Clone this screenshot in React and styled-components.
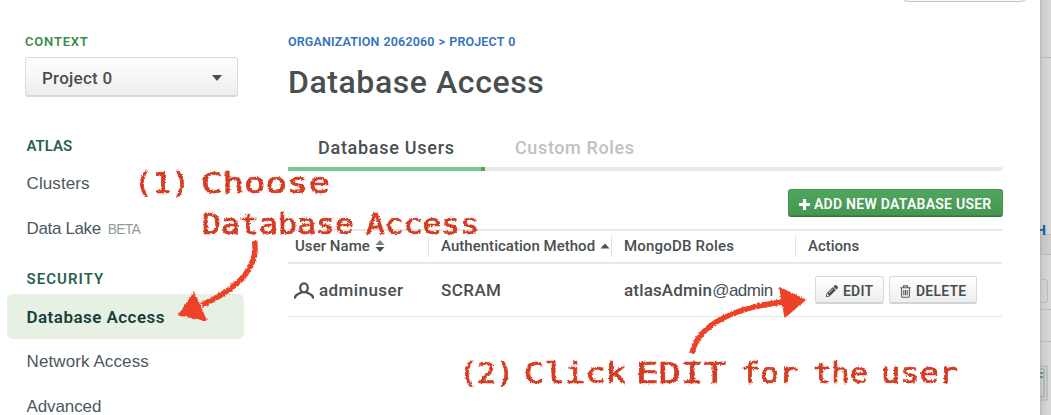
import React from 'react';
import styled, { createGlobalStyle, css } from 'styled-components';
import { FaPencilAlt } from 'react-icons/fa';

const GlobalStyle = createGlobalStyle`
  * { box-sizing: border-box; }
  body {
    margin: 0;
    background: #fff;
    color: #494f50;
    font-family: Roboto, "Liberation Sans", sans-serif;
    overflow: hidden;
  }
`;

const Page = styled.div`
  position: relative;
  display: flex;
  width: 1051px;
  height: 415px;
  overflow: hidden;
`;

const Sidebar = styled.aside`
  width: 250px;
  flex: none;
  padding: 33px 6px 0 7px;
`;

const Context = styled.div`
  padding: 0 0 38px 18px;
`;

const ContextLabel = styled.div`
  height: 24px;
  line-height: 17px;
  font-size: 13px;
  font-weight: 600;
  letter-spacing: 0.8px;
  color: #3d8b4b;
`;

const ProjectSelect = styled.button`
  display: flex;
  align-items: center;
  justify-content: space-between;
  width: 213px;
  height: 40px;
  padding: 3px 15px 0 16px;
  border: 1px solid #d9dddd;
  border-bottom: 2px solid #d3d9d8;
  border-radius: 3px;
  background: linear-gradient(#fff, #ededed);
  color: #494f50;
  font: 500 17px Roboto, sans-serif;
  letter-spacing: 0.25px;
`;

const NavSection = styled.nav`
  padding-bottom: 17px;
`;

const NavTitle = styled.div`
  height: 26px;
  padding-left: 19.5px;
  line-height: 22px;
  font-size: 15px;
  font-weight: 600;
  letter-spacing: ${(p) => p.$spacing || '0'};
  color: #26634d;
`;

const NavItem = styled.a`
  display: flex;
  align-items: baseline;
  height: 45px;
  width: 237px;
  padding-left: 19.5px;
  border-radius: 6px;
  font: 400 17px/46px "Liberation Sans", sans-serif;
  letter-spacing: ${(p) => p.$spacing || '0.1px'};
  color: #4a5961;
  ${(p) => p.$active && css`
    background: #e6f1e4;
    color: #173f39;
    font: 600 17px/46px Roboto, sans-serif;
  `}
`;

const Beta = styled.span`
  margin-left: 7px;
  font-size: 14px;
  letter-spacing: -0.84px;
  color: #929ba0;
`;

const Main = styled.main`
  width: 714px;
  flex: none;
  margin-left: 38px;
`;

const TopBar = styled.div`
  position: absolute;
  top: 0;
  left: 899px;
  width: 131px;
  height: 3px;
  overflow: hidden;
  display: flex;
  align-items: flex-end;
`;

const TopButton = styled.div`
  flex: none;
  width: 131px;
  height: 28px;
  margin-bottom: 1px;
  border: 1px solid #b9c6c2;
  border-radius: 10px;
  background: #f7faf9;
`;

const Breadcrumb = styled.div`
  padding-top: 33px;
  line-height: 17px;
  font-size: 12.5px;
  font-weight: 600;
  letter-spacing: 0.14px;
  word-spacing: 0.8px;
  white-space: nowrap;
  color: #3472bd;
`;

const Title = styled.h1`
  margin: 12px 0 26px;
  line-height: 40px;
  font-size: 32px;
  font-weight: 500;
  letter-spacing: 0.58px;
`;

const Tabs = styled.div`
  display: flex;
  height: 43px;
  background: linear-gradient(#e7e8e8, #e7e8e8) bottom / 100% 4px no-repeat;
`;

const Tab = styled.div`
  width: 197px;
  padding-left: 30px;
  font-size: 18px;
  font-weight: 500;
  line-height: 40px;
  white-space: nowrap;
  letter-spacing: ${(p) => (p.$active ? '0.72px' : '0.62px')};
  color: ${(p) => (p.$active ? '#494f50' : '#bfc1c1')};
  ${(p) => p.$active && css`
    background: linear-gradient(90deg, #7dc68f 193px, #4fa55c 193px) bottom / 100% 4px no-repeat;
  `}
`;

const Toolbar = styled.div`
  display: flex;
  justify-content: flex-end;
  margin-right: -1px;
  padding: 18px 0 12px;
`;

const AddButton = styled.button`
  display: flex;
  align-items: center;
  gap: 4px;
  width: 215px;
  height: 28px;
  padding: 2px 0 0 10px;
  border: 1px solid #43934f;
  border-bottom-color: #35783f;
  border-radius: 3px;
  background: linear-gradient(#50a65c, #469552);
  box-shadow: inset 0 -1px #3c8547;
  color: #fff;
  white-space: nowrap;
  font: 600 14px Roboto, sans-serif;
  letter-spacing: 0.26px;
`;

const Row = styled.div`
  display: grid;
  grid-template-columns: 141px 183px 184px 206px;
  align-items: center;
  height: 53px;
  border-bottom: 1px solid #e4e6e6;
  font-size: 17px;
  font-weight: 500;
`;

const HeaderRow = styled(Row)`
  height: 35px;
  border-top: 2px solid #e7e9e9;
  border-bottom: 2px solid #e7e9e9;
  font-size: 15px;
`;

const HeaderCell = styled.div`
  display: flex;
  align-items: center;
  gap: 5px;
  height: 21px;
  padding: 0 0 2px ${(p) => (p.$first ? '7px' : '12px')};
  border-right: ${(p) => (p.$last ? '0' : '1px solid #e2e4e4')};
  white-space: nowrap;
  letter-spacing: ${(p) => p.$spacing || '0'};
`;

const Cell = styled.div`
  display: flex;
  align-items: center;
  padding-left: ${(p) => p.$pad || '12px'};
  white-space: nowrap;
  letter-spacing: ${(p) => p.$spacing || '0'};
  gap: ${(p) => p.$gap || '0'};
`;

const Role = styled.span`
  white-space: nowrap;
`;

const Source = styled.span`
  font: 400 17px "Liberation Sans", sans-serif;
  letter-spacing: -0.5px;
`;

const ActionButton = styled.button`
  display: flex;
  align-items: center;
  gap: 5px;
  width: ${(p) => p.$width};
  height: 28px;
  padding: 3px 0 0 10px;
  border: 1px solid #d7dadb;
  border-bottom: 2px solid #d0d5d5;
  border-radius: 3px;
  background: linear-gradient(#fff, #eee);
  color: #494f50;
  font: 600 14px Roboto, sans-serif;
  letter-spacing: 0.2px;
`;

const Backdrop = styled.div`
  position: relative;
  width: 11px;
  height: 415px;
  margin-left: auto;
  overflow: hidden;
  background: linear-gradient(90deg, #b5b5b5, #cbcbcb 2px, #d9d9d9);
  flex: none;
`;

const Band = styled.div`
  height: ${(p) => p.$height};
  border-bottom: 1px solid #bababa;
  padding-top: ${(p) => p.$top || '0'};
  background: ${(p) => p.$tint || 'transparent'};
`;

const ClippedLink = styled.div`
  width: 6px;
  height: 16px;
  display: flex;
  justify-content: flex-end;
  overflow: hidden;
  font: 700 15px/16px "Liberation Sans", sans-serif;
  color: #225b9b;
`;

const ClippedField = styled.div`
  width: 8px;
  height: 24px;
  border: 1px solid #b9b9b9;
  border-left: 0;
  border-radius: 0 4px 4px 0;
`;

const Overlay = styled.svg`
  position: absolute;
  inset: 0;
`;

const UserIcon = () => (
  <svg width="20" height="17" viewBox="0 0 20 17" fill="none" stroke="#494f50" strokeWidth="2.2">
    <ellipse cx="10" cy="5.8" rx="3.8" ry="4.5" />
    <path d="M1.100 16.500v-1.400c.2-2.500 3.400-3 6.800-4.800M18.900 16.500v-1.400c-.2-2.500-3.400-3-6.800-4.800" />
  </svg>
);

const PlusIcon = () => (
  <svg width="11" height="11" viewBox="0 0 11 11">
    <path d="M5.500 0v11M0 5.500h11" stroke="#fff" strokeWidth="3.200" />
  </svg>
);

const SortIcon = () => (
  <svg width="10" height="12" viewBox="0 0 10 12">
    <path d="M5 0l4.500 5h-9z" fill="#7d8283" />
    <path d="M5 12L.5 7h9z" fill="#494f50" />
  </svg>
);

const Triangle = ({ down }) => (
  <svg width="10" height="6" viewBox="0 0 10 6">
    <path d={down ? 'M0 0h10L5 6z' : 'M5 .5l4.500 5h-9z'} fill="#494f50" />
  </svg>
);

const TrashIcon = () => (
  <svg width="11" height="13" viewBox="0 0 11 13" fill="none" stroke="#5b6061" strokeWidth="1.100">
    <path d="M.3 2.800h10.400M3.500 2.600V.9h4v1.700M1.600 3v8.400q0 .9.9.9h6q.9 0 .9-.9V3M3.800 5v5.300M5.500 5v5.300M7.200 5v5.300" />
  </svg>
);

/* word, left edge, baseline, drawn width */
const notes = [
  ['(1)', 134, 193, 56],
  ['Choose', 201, 193, 129],
  ['Database', 202, 234, 152],
  ['Access', 366, 234, 113],
  ['(2)', 459, 383, 55],
  ['Click', 524, 383, 102],
  ['EDIT', 636, 383, 90],
  ['for', 741, 383, 57],
  ['the', 813, 383, 55],
  ['user', 881, 383, 77],
];

export default function App() {
  return (
    <Page>
      <GlobalStyle />
      <Sidebar>
        <Context>
          <ContextLabel>CONTEXT</ContextLabel>
          <ProjectSelect>Project 0 <Triangle down /></ProjectSelect>
        </Context>
        <NavSection>
          <NavTitle>ATLAS</NavTitle>
          <NavItem>Clusters</NavItem>
          <NavItem $spacing="-0.35px">Data Lake<Beta>BETA</Beta></NavItem>
        </NavSection>
        <NavSection>
          <NavTitle $spacing="1.05px">SECURITY</NavTitle>
          <NavItem $active $spacing="0.46px">Database Access</NavItem>
          <NavItem>Network Access</NavItem>
          <NavItem $spacing="-0.1px">Advanced</NavItem>
        </NavSection>
      </Sidebar>

      <Main>
        <TopBar><TopButton /></TopBar>
        <Breadcrumb>ORGANIZATION 2062060 &gt; PROJECT 0</Breadcrumb>
        <Title>Database Access</Title>
        <Tabs>
          <Tab $active>Database Users</Tab>
          <Tab>Custom Roles</Tab>
        </Tabs>
        <Toolbar>
          <AddButton><PlusIcon />ADD NEW DATABASE USER</AddButton>
        </Toolbar>
        <HeaderRow>
          <HeaderCell $first $spacing="0.05px">User Name <SortIcon /></HeaderCell>
          <HeaderCell $spacing="0.03px">Authentication Method <Triangle /></HeaderCell>
          <HeaderCell $spacing="0.2px">MongoDB Roles</HeaderCell>
          <HeaderCell $last>Actions</HeaderCell>
        </HeaderRow>
        <Row>
          <Cell $pad="6px" $gap="5px" $spacing="0.42px"><UserIcon />adminuser</Cell>
          <Cell $spacing="0.44px">SCRAM</Cell>
          <Cell $spacing="0.16px"><Role>atlasAdmin<Source>@admin</Source></Role></Cell>
          <Cell $pad="19px" $gap="5px">
            <ActionButton $width="69px"><FaPencilAlt size={12} />EDIT</ActionButton>
            <ActionButton $width="88px"><TrashIcon />DELETE</ActionButton>
          </Cell>
        </Row>
      </Main>

      <Backdrop>
        <Band $height="58px" />
        <Band $height="177px" $top="164px"><ClippedLink>H</ClippedLink></Band>
        <Band $height="20px" $tint="#0000000a" />
        <Band $height="55px" $top="24px"><ClippedField /></Band>
        <Band $height="32px" />
        <svg width="11" height="73" viewBox="0 0 11 73" fill="none">
          <path d="M0 24h7v34H0" stroke="#aaa" />
          <path d="M0 27h4v28H0" stroke="#999" />
          <path d="M0 31h3M0 35h3" stroke="#359442" strokeWidth="1.500" />
          <path d="M0 41h2M0 46h2M0 51h2" stroke="#b9bdc0" />
        </svg>
      </Backdrop>

      <Overlay width="1051" height="415" viewBox="0 0 1051 415">
        <defs>
          <filter id="chalk" filterUnits="userSpaceOnUse" x="0" y="0" width="1051" height="415" colorInterpolationFilters="sRGB">
            <feTurbulence type="fractalNoise" baseFrequency="0.45" numOctaves="2" seed="4" />
            <feDisplacementMap in="SourceGraphic" scale="3.200" xChannelSelector="R" yChannelSelector="G" />
          </filter>
        </defs>
        <g filter="url(#chalk)">
          <g fill="#d43b20" stroke="#d43b20" strokeWidth="0.700" fontFamily="DejaVu Sans Mono, monospace" fontSize="28">
            {notes.map(([word, x, y, width]) => (
              <text key={word} x={x} y={y} textLength={width} lengthAdjust="spacingAndGlyphs">{word}</text>
            ))}
          </g>
          <g fill="none" stroke="#ee4228" strokeWidth="5.500">
            <path d="M254.500 241C259 269 237 289 202 305" />
            <path d="M692 353C698 325 734 307 784 302" />
          </g>
          <g fill="#ee4228" stroke="#ee4228" strokeWidth="1.500" strokeLinejoin="round">
            <path d="M194 293L179 315L206 320Z" />
            <path d="M780 288L805 300L785 317Z" />
          </g>
        </g>
      </Overlay>
    </Page>
  );
}
